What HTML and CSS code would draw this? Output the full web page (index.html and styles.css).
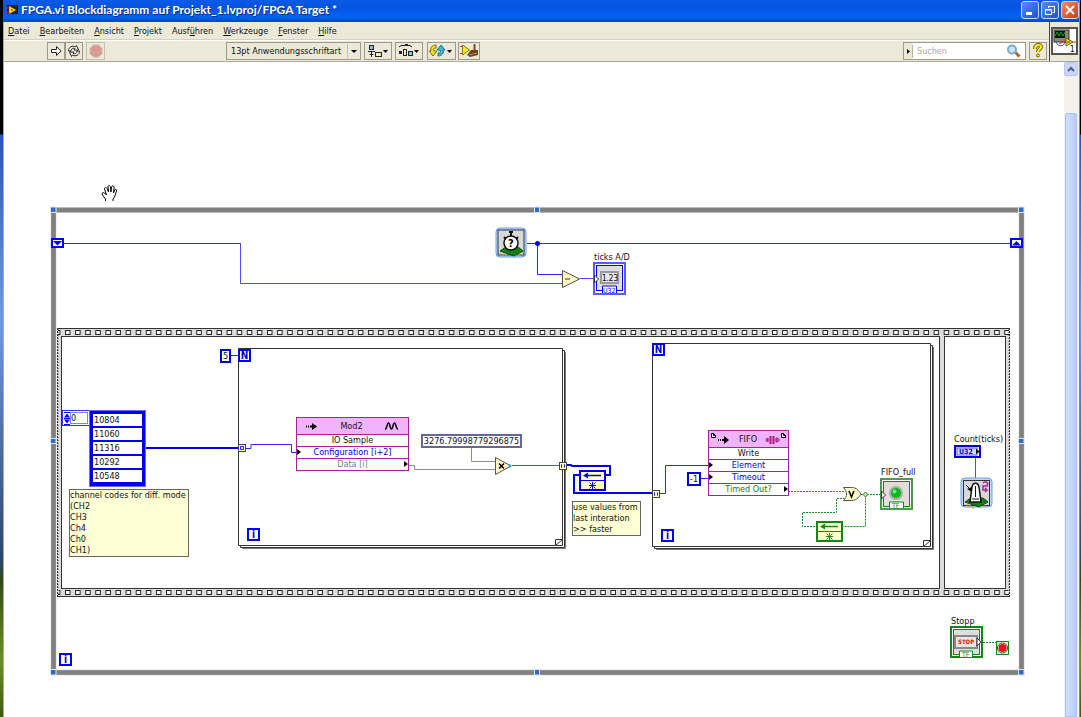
FILE: index.html
```html
<!DOCTYPE html>
<html lang="de">
<head>
    <meta charset="UTF-8">
    <title>FPGA.vi Blockdiagramm</title>
    <link rel="stylesheet" href="styles.css">
</head>
<body>
    <div class="window">
        <header class="titlebar">
            <svg class="title-icon" width="12" height="12" viewBox="0 0 12 12">
                <rect x="1" y="1" width="11" height="9" fill="#222"/>
                <path d="M3 2l7 4-7 4z" fill="#ffe600"/>
                <path d="M0 4h4M0 8h4" stroke="#e33"/>
                <path d="M5 6h2" stroke="#222"/>
            </svg>
            <h1>FPGA.vi Blockdiagramm auf Projekt_1.lvproj/FPGA Target *</h1>
            <div class="window-buttons">
                <button type="button" class="win-btn" aria-label="Minimieren"><svg width="16" height="16"><path d="M4 11.500h6" stroke="#fff" stroke-width="3"/></svg></button>
                <button type="button" class="win-btn" aria-label="Wiederherstellen"><svg width="16" height="16" fill="none" stroke="#fff"><path d="M6.500 6V4.500H12.500V10.500H10.500M6 4.500h7"/><path d="M3.500 7.500h6v5h-6zM3 8h7"/></svg></button>
                <button type="button" class="win-btn close" aria-label="Schließen"><svg width="16" height="16"><path d="M4 4l8 8M12 4l-8 8" stroke="#fff" stroke-width="2"/></svg></button>
            </div>
        </header>

        <div class="head">
            <div class="bars">
                <nav class="menu">
                    <a href="#"><u>D</u>atei</a>
                    <a href="#"><u>B</u>earbeiten</a>
                    <a href="#"><u>A</u>nsicht</a>
                    <a href="#"><u>P</u>rojekt</a>
                    <a href="#">Ausf<u>ü</u>hren</a>
                    <a href="#"><u>W</u>erkzeuge</a>
                    <a href="#"><u>F</u>enster</a>
                    <a href="#"><u>H</u>ilfe</a>
                </nav>
                <div class="toolbar">
                    <div class="group">
                        <button type="button" class="tool" aria-label="Ausführen"><svg width="16" height="14"><path d="M3.500 5.500h5v-3l4.500 4.500-4.500 4.500v-3h-5z" fill="#fff" stroke="#222"/></svg></button>
                        <button type="button" class="tool" aria-label="Wiederholt ausführen"><svg width="16" height="14" fill="#fff" stroke="#222"><path d="M2.500 7c0-4 4-6 7-4l1-1.500 2 4.500h-4.500l1-1.500c-2-1-4 0-4 2.500z"/><path d="M13.500 7c0 4-4 6-7 4l-1 1.500-2-4.500h4.500l-1 1.500c2 1 4 0 4-2.500z"/></svg></button>
                    </div>
                    <button type="button" class="tool abort" aria-label="Abbrechen" disabled><svg width="16" height="14"><path d="M5.500 1h5l3.500 3.500v5l-3.500 3.500h-5L2 9.500v-5z" fill="#d99a94" stroke="#c9b4ae"/></svg></button>
                    <div class="font-box">
                        <select aria-label="Schriftart"><option>13pt Anwendungsschriftart</option></select>
                        <svg class="arrow" width="14" height="16"><path d="M1.500 1v14" stroke="#c5c2b2"/><path d="M5 7h6l-3 3z"/></svg>
                    </div>
                    <button type="button" class="tool drop" aria-label="Objekte ausrichten"><svg width="26" height="16"><rect x="4.500" y="2.500" width="4" height="4" fill="#6ccbe8" stroke="#222"/><path d="M3 8.500h7M6.500 9v5M4.500 11.500h4" stroke="#222"/><rect x="10.500" y="9.500" width="6" height="4" fill="#f5ef9b" stroke="#222"/><path d="M18 7h5l-2.500 3z"/></svg></button>
                    <button type="button" class="tool drop" aria-label="Objekte einteilen"><svg width="26" height="16"><path d="M3 4l2-1.500h9l2 1.500M9 1.500h3" stroke="#222" fill="none"/><path d="M3 9.500h3" stroke="#222" stroke-width="3"/><rect x="7.500" y="6.500" width="3" height="6" fill="#f5ef9b" stroke="#222"/><rect x="12.500" y="8.500" width="4" height="4" fill="#6ccbe8" stroke="#222"/><path d="M18 7h5l-2.500 3z"/></svg></button>
                    <button type="button" class="tool drop order" aria-label="Neu ordnen"><svg width="27" height="16"><path d="M8 2C4 2 2 5 3 8H1l4 5 4-5H6c-1-2 0-3 2-3z" fill="#f2e11c" stroke="#777014"/><path d="M10 13c4 0 6-3 5-6h2l-4-5-4 5h3c1 2 0 3-2 3z" fill="#41b8cf" stroke="#1f7387"/><path d="M19 7h5l-2.500 3z"/></svg></button>
                    <button type="button" class="tool clean" aria-label="Diagramm aufräumen"><svg width="20" height="16"><path d="M1 3.500h3M1 10.500h3" stroke="#e22"/><path d="M3.500 2l7 5-7 5z" fill="#ffe52b" stroke="#8a7a10"/><path d="M15.500 1v7" stroke="#7a4b1c" stroke-width="2"/><path d="M12 7h7v5l-8 2-3-2z" fill="#6b431c"/><path d="M10 12l8-2" stroke="#c89040"/></svg></button>
                    <div class="search">
                        <svg width="10" height="15"><path d="M3 5l3 2.500L3 10z"/><path d="M8.500 1v13" stroke="#b5b2a2"/></svg>
                        <input type="search" aria-label="Suchen" placeholder="Suchen">
                        <svg width="16" height="15"><path d="M9.500 8.500l4 4" stroke="#b3622d" stroke-width="3"/><circle cx="6" cy="5.500" r="4" fill="#c5e7fb" stroke="#7fa8cf" stroke-width="2"/></svg>
                    </div>
                    <button type="button" class="tool help" aria-label="Kontexthilfe"><svg width="16" height="16"><path d="M5 6c0-5 6-5 6-2 0 2-3 2-3 5" fill="none" stroke="#766b00" stroke-width="4"/><path d="M5 6c0-5 6-5 6-2 0 2-3 2-3 5" fill="none" stroke="#ffe81a" stroke-width="2"/><circle cx="8" cy="12.500" r="1.500" fill="#ffe81a" stroke="#766b00"/></svg></button>
                </div>
            </div>
            <div class="vi-panel">
                <svg class="vi-icon" width="27" height="28" viewBox="0 0 27 28">
                    <rect x="1" y="1" width="25" height="26" fill="#fff" stroke="#555" stroke-width="2"/>
                    <rect x="3" y="3" width="15" height="12" fill="#8c8a6a" stroke="#333"/>
                    <rect x="4" y="4" width="10" height="7" fill="#001800"/>
                    <path d="M4 9l2-4 2 4 2-4 2 4 2-4" fill="none" stroke="#18a030"/>
                    <path d="M5 15c2 5 8 5 9 0" fill="none" stroke="#33c"/>
                    <path d="M8 17l8-4M22 15h4" stroke="#e22"/>
                    <path d="M15 11l7 4-7 4z" fill="#ffe52b" stroke="#665a00"/>
                    <path d="M16 15h3" stroke="#222"/>
                    <text x="19" y="25" class="t8">1</text>
                </svg>
            </div>
        </div>

        <div class="work">
            <main class="canvas">
                <svg class="wires" width="1060" height="655" viewBox="4 62 1060 655">
                    <defs>
                        <pattern id="film" x="65" y="328" width="10.100" height="9" patternUnits="userSpaceOnUse">
                            <rect width="11" height="9" fill="#dcdcdc"/>
                            <rect x=".5" y="2.500" width="4.500" height="4" fill="#fff" stroke="#222"/>
                        </pattern>
                        <pattern id="film2" x="65" y="588" width="10.100" height="9" patternUnits="userSpaceOnUse">
                            <rect width="11" height="9" fill="#dcdcdc"/>
                            <rect x=".5" y="2.500" width="4.500" height="4" fill="#fff" stroke="#222"/>
                        </pattern>
                    </defs>

                    <!-- while loop -->
                    <rect x="53.500" y="210" width="968" height="462.500" fill="none" stroke="#bbb" stroke-width="5.500"/>
                    <rect x="53.500" y="210" width="968" height="462.500" fill="none" stroke="#808080" stroke-width="4.500"/>
                    <g fill="#316ac5" stroke="#dce8f8">
                        <rect x="50.500" y="207" width="5.500" height="5.500"/><rect x="534.500" y="207" width="5" height="5.500"/><rect x="1018.500" y="207" width="5.500" height="5.500"/>
                        <rect x="50.500" y="438.500" width="5.500" height="5"/><rect x="1018.500" y="438.500" width="5.500" height="5"/>
                        <rect x="50.500" y="669.500" width="5.500" height="5.500"/><rect x="534.500" y="669.500" width="5" height="5.500"/><rect x="1018.500" y="669.500" width="5.500" height="5.500"/>
                    </g>

                    <!-- flat sequence -->
                    <rect x="57" y="328" width="953" height="269" fill="#dcdcdc"/>
                    <rect x="58" y="328" width="951" height="9" fill="url(#film)"/>
                    <rect x="58" y="588" width="951" height="9" fill="url(#film2)"/>
                    <path d="M57 328.500h953M57 596.500h953" stroke="#333"/>
                    <path d="M57.500 328v269M1009.500 328v269" stroke="#333" stroke-dasharray="2 1"/>
                    <path d="M58.500 329v267M1008.500 329v267" stroke="#999" stroke-dasharray="1 2"/>
                    <rect x="61.500" y="336.500" width="878" height="252" fill="#fff" stroke="#333"/>
                    <rect x="944.500" y="336.500" width="61" height="252" fill="#fff" stroke="#333"/>

                    <!-- for loops -->
                    <g fill="#fff" stroke="#333">
                        <path d="M242.500 352.500h323v196h-323z" stroke="#777"/>
                        <path d="M240.500 350.500h324v197h-324z"/>
                        <path d="M238.500 348.500h324v197h-324z"/>
                        <path d="M555.500 545.500v-6h7z"/>
                        <path d="M656.500 347.500h277v202h-277z" stroke="#777"/>
                        <path d="M654.500 345.500h278v203h-278z"/>
                        <path d="M652.500 343.500h278v203h-278z"/>
                        <path d="M923.500 546.500v-6h7z"/>
                    </g>

                    <!-- integer wires -->
                    <g fill="none" stroke="#2828ff">
                        <path d="M64 243.500H241M527 243.500h483M537.500 243.500v31h25M231 355.500h7M701 478.500h7"/>
                        <path d="M240.500 243v40.500H562M580 278.500h14M512 465.500h47M975.500 458v20" stroke="#4a4aff"/>
                        <path d="M245 448.500h6v-4h40.500v8h5M660 493.500h5.500v-28h43"/>
                    </g>
                    <circle cx="537.500" cy="243.500" r="2.500" fill="#0000ff"/>
                    <g fill="none" stroke="#0000f0" stroke-width="2">
                        <path d="M146 448h92"/>
                        <path d="M566 465h5l1 1h38v9h-4M579 475h-5v18h79"/>
                    </g>

                    <!-- fixed-point wires -->
                    <path d="M409 465.500h5.500v4h81M471.500 448v13.500h24" fill="none" stroke="#8888aa"/>

                    <!-- boolean wires -->
                    <path d="M788 491.500h56M861 494.500h20M865.500 494.500v32h-23M815 526.500h-12.500v-14h34v-14h8M983 642.500h13" fill="none" stroke="#1a8a1a" stroke-dasharray="2 1"/>
                    <path d="M865.500 492l2.500 2.500-2.500 2.500-2.500-2.500z" fill="#bfe5bf" stroke="#1a8a1a"/>

                    <!-- tunnels -->
                    <g fill="#ffffcc" stroke="#444">
                        <rect x="238.500" y="444.500" width="7" height="7"/><rect x="559.500" y="462.500" width="7" height="7"/><rect x="652.500" y="490.500" width="7" height="7"/>
                    </g>
                    <g fill="none" stroke="#2020f0">
                        <path d="M240.500 446.500h3v3h-3zM562 464.500h-.5v3h.5M564 464.500h.5v3h-.5M655 492.500h-.5v3h.5M657 492.500h.5v3h-.5"/>
                    </g>

                    <!-- shift registers -->
                    <g fill="#fff" stroke="#0000ff" stroke-width="2"><rect x="52" y="239" width="11" height="8"/><rect x="1011" y="239" width="11" height="8"/></g>
                    <path d="M53 241h9l-4.500 4.500zM1012 245.500h9l-4.500-4.500z" fill="#0000e0"/>

                    <!-- arithmetic and logic -->
                    <g fill="#fdf8c8" stroke="#555">
                        <path d="M562.500 270.500v17l17-8.500z"/>
                        <path d="M495.500 457.500v17l15.500-8.500z"/>
                        <path d="M843.500 487.500h8c5 0 7 3 9.500 6.500-2.500 4-5 6.500-9.500 6.500h-8c4-4 4-9 0-13z"/>
                    </g>
                    <path d="M565 279h5" stroke="#333"/>
                    <path d="M499 463.500l5 5M504 463.500l-5 5M849 491l2.500 6 2.500-6" stroke="#000" fill="none" stroke-width="1.500"/>
                    <path d="M509 464l3 2-3 2z" fill="#2090ff"/>

                    <!-- hand cursor -->
                    <path d="M105.500 201v-2l-3-4c-1-2 0-3 2-2l2 2-2-6c0-2 2-2 3 0l1 3-.5-5c0-2 2-2 2.500 0l.5 5 .5-5c1-2 3-1 2.500 1l-.5 5 1-3c1-1 2.500-1 2 1l-2 6-1.500 2v2" fill="#fff" stroke="#000"/>
                </svg>

                <div class="terminal n-first">N</div>
                <div class="terminal i-first">i</div>
                <div class="terminal n-second">N</div>
                <div class="terminal i-second">i</div>
                <div class="terminal i-while">i</div>

                <input class="const count" aria-label="Anzahl" value="5">
                <input class="const timeout" aria-label="Timeout" value="-1">
                <input class="const factor" aria-label="Faktor" value="3276.79998779296875">

                <div class="index">
                    <svg width="6" height="13"><path d="M0 5.500l3-4 3 4zM0 7.500l3 4 3-4z" fill="#0000ff"/><path d="M0 6.500h6M0 .5h6M0 12.500h6" stroke="#0000ff"/></svg>
                    <input aria-label="Index" value="0">
                </div>
                <div class="array">
                    <input aria-label="Kanal 0" value="10804">
                    <input aria-label="Kanal 1" value="11060">
                    <input aria-label="Kanal 2" value="11316">
                    <input aria-label="Kanal 3" value="10292">
                    <input aria-label="Kanal 4" value="10548">
                </div>

                <p class="comment channels">channel codes for diff. mode<br>(CH2<br>CH3<br>Ch4<br>Ch0<br>CH1)</p>
                <p class="comment faster">use values from<br>last interation<br>&gt;&gt; faster</p>

                <div class="io-node mod">
                    <div class="io-head">
                        <svg width="14" height="10"><path d="M1 5.500h1M3 5.500h1M5 5.500h6" stroke="#000" stroke-width="2"/><path d="M7 2v7l5-3.500z"/></svg>
                        <span>Mod2</span>
                        <svg width="15" height="10"><path d="M1 8c2 0 2-6 3.500-6S6 8 7.500 8 9 2 10.500 2 12 8 14 8" fill="none" stroke="#000" stroke-width="1.500"/></svg>
                    </div>
                    <div class="io-row">IO Sample</div>
                    <div class="io-row int in">Configuration [i+2]</div>
                    <div class="io-row fxp out">Data [i]</div>
                </div>

                <div class="io-node fifo">
                    <div class="io-head">
                        <svg width="21" height="14"><path d="M1.500 1.500h2l2 2v2h-4zM3.500 1.500v2h2" fill="#fff" stroke="#000"/><path d="M8 8h1M10 8h1M12 8h4" stroke="#000" stroke-width="2"/><path d="M14 4v8l5-4z"/></svg>
                        <span>FIFO</span>
                        <svg width="22" height="14"><path d="M2.500 6v4M5.500 4v8M8.500 4v8M11.500 6v4" stroke="#b01878" stroke-width="2"/><path d="M0 8h13" stroke="#c040a0"/><path d="M12 5.500l2.500 2.500-2.500 2.500" fill="none" stroke="#402060"/><path d="M16.500 1.500h2l2 2v2h-4zM18.500 1.500v2h2" fill="#fff" stroke="#000"/></svg>
                    </div>
                    <div class="io-row">Write</div>
                    <div class="io-row int in">Element</div>
                    <div class="io-row int in">Timeout</div>
                    <div class="io-row bool out">Timed Out?</div>
                </div>

                <svg class="node feedback" width="27" height="21" viewBox="0 0 27 21" color="#0000e0"><use href="#fb"/></svg>
                <svg class="node feedback-bool" width="27" height="21" viewBox="0 0 27 21" color="#118811">
                    <g id="fb">
                        <rect x="1" y="1" width="25" height="19" fill="#ffffcc" stroke="currentColor" stroke-width="2"/>
                        <path d="M1 10.500h25" stroke="currentColor"/>
                        <path d="M4 5.500l5-3v6z" fill="currentColor"/><path d="M8 5.500h14" stroke="currentColor" stroke-width="1.500"/>
                        <path d="M10.500 12.500l2 2M16.500 12.500l-2 2M10.500 18.500l2-2M16.500 18.500l-2-2M13.500 12v7M10 15.500h7" fill="none" stroke="currentColor"/>
                    </g>
                </svg>

                <svg class="node tick" width="32" height="32" viewBox="0 0 32 32">
                    <rect x="1" y="1" width="30" height="29" rx="4" fill="#b8d8ff" stroke="#6aa0f0"/>
                    <rect x="3" y="3" width="26" height="25" fill="#d8d8d8" stroke="#333"/>
                    <path d="M5 24l6-4h12l5 4-9 5z" fill="#128012" stroke="#0a4a0a"/>
                    <path d="M5 25v3M8 26v3M11 27v3M21 28v2M24 27v2M27 25v3" stroke="#c8b030"/>
                    <path d="M14 5h4M16 5v4M9 10l2 2M23 10l-2 2" stroke="#111" stroke-width="2"/>
                    <circle cx="16" cy="16" r="7" fill="#fff" stroke="#111" stroke-width="1.500"/>
                    <text x="13" y="20" class="tb">?</text>
                </svg>

                <svg class="node wait" width="33" height="33" viewBox="0 0 33 33">
                    <rect x="1" y="1" width="31" height="29" rx="4" fill="#b8d8ff" stroke="#6aa0f0"/>
                    <rect x="3.500" y="3.500" width="26" height="25" fill="#d8d8d8" stroke="#333"/>
                    <path d="M5 25l6-4h12l5 4-9 5z" fill="#128012" stroke="#0a4a0a"/>
                    <path d="M7 27v3M10 28v3M13 29v3M21 29v2M24 28v2" stroke="#c8b030"/>
                    <path d="M10 25l2-15c1-5 6-5 7 0l2 15z" fill="#fff" stroke="#111" stroke-width="1.500"/>
                    <path d="M15.500 9v11M12 22h7M6 8l6 6" stroke="#111"/><path d="M7 12l5-2v5z"/>
                    <path d="M23 6c3-3 6 0 4 3h-4v4h4l-2-2M27 13l-2 2" fill="none" stroke="#b020a0" stroke-width="1.500"/>
                </svg>

                <svg class="node ticks-out" width="33" height="33" viewBox="0 0 33 33">
                    <rect x="1" y="1" width="31" height="31" fill="#fff" stroke="#5a5aff" stroke-width="2"/>
                    <rect x="3.500" y="3.500" width="26" height="25" fill="#dedede" stroke="#0000e0"/>
                    <path d="M1.500 13l4 4-4 4z" fill="#fff" stroke="#333"/>
                    <rect x="8" y="10" width="17" height="11" fill="#e6e6e6" stroke="#999" stroke-width="2"/>
                    <text x="9" y="19" class="t8">1.23</text>
                    <path d="M9.500 31v-7h14v7" fill="#fff" stroke="#0000e0"/>
                    <text x="10" y="31" class="t7 blue">U32</text>
                </svg>

                <svg class="node led" width="33" height="33" viewBox="0 0 33 33">
                    <rect x="1" y="1" width="31" height="30" fill="#fff" stroke="#4a9a4a" stroke-width="2"/>
                    <rect x="3.500" y="3.500" width="26" height="25" fill="#dedede" stroke="#118811"/>
                    <path d="M1.500 13l4 4-4 4z" fill="#fff" stroke="#333"/>
                    <circle cx="16" cy="15" r="7" fill="#aaa"/><circle cx="16" cy="15" r="5" fill="#11b522"/><circle cx="14.500" cy="13.500" r="2" fill="#6cf07a"/>
                    <path d="M9.500 30v-6h14v6" fill="#fff" stroke="#118811"/>
                    <text x="12" y="30" class="t7 green">TF</text>
                </svg>

                <svg class="node u32" width="28" height="14" viewBox="0 0 28 14">
                    <rect x="1" y="1" width="25" height="11" fill="#fff" stroke="#0000e0" stroke-width="2"/>
                    <rect x="3" y="3" width="20" height="7" fill="#d8d8ff" stroke="#5a5aff"/>
                    <text x="5" y="9" class="tb7 blue">U32</text>
                    <path d="M22 4l4 2.500-4 2.500z"/>
                </svg>

                <button type="button" class="node stop" aria-label="Stopp">
                    <svg width="33" height="32" viewBox="0 0 33 32">
                        <rect x="1" y="1" width="31" height="30" fill="#fff" stroke="#118811" stroke-width="2"/>
                        <rect x="3.500" y="3.500" width="26" height="25" fill="#dedede" stroke="#118811"/>
                        <rect x="5" y="10" width="22" height="12" fill="#e6e6e6" stroke="#888" stroke-width="2"/>
                        <text x="8" y="18" class="tb6 red">STOP</text>
                        <path d="M27 12l4 4-4 4z" fill="#fff" stroke="#333"/>
                        <path d="M9.500 31v-6h13v6" fill="#fff" stroke="#118811"/>
                        <text x="12" y="31" class="t7 green">TF</text>
                    </svg>
                </button>
                <svg class="node stop-cond" width="14" height="14" viewBox="0 0 14 14">
                    <rect x=".5" y=".5" width="12" height="13" fill="#e8f8c8" stroke="#118811"/>
                    <circle cx="6.500" cy="7" r="5" fill="#fff" stroke="#444"/>
                    <circle cx="6.500" cy="7" r="4" fill="#ff1010"/>
                </svg>

                <span class="label l-ticks">ticks A/D</span>
                <span class="label l-full">FIFO_full</span>
                <span class="label l-count">Count(ticks)</span>
                <span class="label l-stop">Stopp</span>
            </main>
            <div class="scrollbar">
                <button type="button" class="scroll-up" aria-label="Nach oben"><svg width="12" height="12"><path d="M3 8l3-3 3 3" fill="none" stroke="#4d6185" stroke-width="2"/></svg></button>
                <div class="thumb"></div>
            </div>
        </div>
    </div>
</body>
</html>
```

FILE: styles.css
```css
* {
    box-sizing: border-box;
}
body {
    margin: 0;
    padding: 0 1px 0 3px;
    height: 100vh;
    overflow: hidden;
    background: linear-gradient(#000 134px, #2a55b8 135px, #6f9be0 320px, #2d4470 560px, #2f4a18 580px, #6f9020 660px, #3c5a12);
    font-family: "DejaVu Sans Condensed", "DejaVu Sans", sans-serif;
    font-size: 9px;
    color: #111;
}
button, input, select {
    font: inherit;
    color: inherit;
    margin: 0;
    padding: 0;
}
svg {
    display: block;
}
.window {
    display: flex;
    flex-direction: column;
    height: 100vh;
    background: #ece9d8;
    border-right: 1px solid #8a8a80;
}

/* title */
.titlebar {
    display: flex;
    align-items: center;
    height: 22px;
    padding: 0 0 2px 3px;
    background: linear-gradient(#0a5be8, #0454e0 30%, #0560f6 75%, #0048c8);
}
.titlebar h1 {
    flex: 1;
    margin: 0 0 0 3px;
    font-family: Lato, "Open Sans", sans-serif;
    font-size: 12px;
    line-height: 16px;
    color: #fff;
    text-shadow: 1px 1px 0 #0a2a80;
    white-space: nowrap;
}
.window-buttons {
    display: flex;
    gap: 2px;
}
.win-btn {
    width: 18px;
    height: 18px;
    border: 1px solid #c8d8fa;
    border-radius: 3px;
    background: linear-gradient(135deg, #5a8af5, #1f4fd8);
}
.win-btn.close {
    background: linear-gradient(135deg, #f0896a, #d03c10);
}

/* menu and toolbar */
.head {
    display: flex;
    height: 40px;
    border-left: 1px solid #aca899;
    border-bottom: 1px solid #aca899;
}
.bars {
    flex: 1;
}
.menu {
    display: flex;
    align-items: center;
    gap: 10px;
    height: 18px;
    padding-left: 4px;
    border-bottom: 1px solid #d5d1bd;
}
.menu a {
    color: #111;
    text-decoration: none;
}
.toolbar {
    display: flex;
    align-items: center;
    height: 21px;
    padding: 0 2px 0 43px;
    border-top: 1px solid #fff;
}
.group {
    display: flex;
}
.tool {
    display: flex;
    align-items: center;
    justify-content: center;
    width: 18px;
    height: 18px;
    border: 1px solid #9d9a8a;
    background: #ece9d8;
}
.tool.abort {
    width: 19px;
    margin: 0 121px 0 3px;
    border-color: #c5c2b2;
}
.tool.drop {
    width: 28px;
    margin-left: 3px;
}
.tool.order {
    width: 29px;
    margin: 0 2px 0 4px;
}
.tool.clean {
    width: 22px;
}
.font-box {
    position: relative;
    width: 135px;
    height: 18px;
    border: 1px solid #9d9a8a;
}
.font-box select {
    width: 100%;
    height: 16px;
    padding-left: 4px;
    border: 0;
    background: none;
    appearance: none;
}
.font-box .arrow {
    position: absolute;
    right: 0;
    top: 0;
    pointer-events: none;
}
.search {
    display: flex;
    align-items: center;
    width: 123px;
    height: 18px;
    margin-left: auto;
    padding-right: 3px;
    border: 1px solid #9d9a8a;
    background: linear-gradient(90deg, #ece9d8 8px, #fff 8px);
}
.search input {
    flex: 1;
    min-width: 0;
    padding-left: 3px;
    border: 0;
    background: none;
}
.search input::placeholder {
    color: #aca899;
}
.tool.help {
    margin-left: 3px;
}
.vi-panel {
    width: 30px;
    border-left: 1px solid #444;
    padding: 5px 0 0 1px;
}

/* diagram */
.work {
    display: flex;
    flex: 1;
    min-height: 0;
}
.canvas {
    position: relative;
    flex: 1;
    overflow: hidden;
    background: #fff;
    border-left: 1px solid #aca899;
}
.wires {
    position: absolute;
    left: 0;
    top: 0;
}
.node, .terminal, .const, .index, .array, .comment, .io-node, .label {
    position: absolute;
}
.label {
    line-height: 12px;
    white-space: nowrap;
}
.l-ticks { left: 590px; top: 189px; }
.l-full { left: 877px; top: 404px; }
.l-count { left: 950px; top: 371px; }
.l-stop { left: 947px; top: 553px; }

.terminal {
    width: 13px;
    height: 13px;
    border: 2px solid #0000ff;
    background: #ffffe0;
    color: #0000d0;
    font-size: 10px;
    font-weight: bold;
    line-height: 9px;
    text-align: center;
}
.n-first { left: 234px; top: 287px; }
.i-first { left: 243px; top: 466px; }
.n-second { left: 648px; top: 281px; }
.i-second { left: 657px; top: 467px; }
.i-while { left: 55px; top: 591px; }

.const {
    height: 14px;
    border: 2px solid #0000e0;
    background: #fff;
    text-align: center;
}
.count { left: 216px; top: 287px; width: 11px; }
.timeout { left: 683px; top: 410px; width: 14px; }
.factor {
    left: 417px;
    top: 372px;
    width: 101px;
    border-color: #66669a;
}
.index {
    display: flex;
    left: 58px;
    top: 348px;
    width: 28px;
    height: 16px;
    padding: 1px;
    border: 1px solid #3030ff;
    background: #fff;
}
.index input {
    flex: 1;
    min-width: 0;
    border: 1px solid #8080ff;
    background: #fff;
}
.array {
    display: flex;
    flex-direction: column;
    gap: 2px;
    left: 85px;
    top: 348px;
    width: 57px;
    padding: 3px 3px 4px;
    border: 1px solid #6a6aff;
    background: #0000f0;
}
.array input {
    width: 100%;
    height: 12px;
    padding-left: 1px;
    border: 0;
    background: #fff;
}
.comment {
    margin: 0;
    border: 1px solid #666;
    background: #ffffd5;
    line-height: 11px;
    white-space: nowrap;
}
.channels { left: 65px; top: 427px; width: 120px; }
.faster { left: 568px; top: 439px; width: 69px; }

.io-node {
    border: 1px solid #a8209a;
    background: #fff;
    text-align: center;
}
.mod { left: 292px; top: 355px; width: 113px; }
.fifo { left: 704px; top: 368px; width: 81px; }
.io-head {
    display: flex;
    align-items: center;
    justify-content: space-between;
    height: 16px;
    background: #f0b4ff;
}
.mod .io-head {
    padding: 0 9px 0 8px;
}
.fifo .io-head {
    padding: 0 1px;
}
.io-row {
    position: relative;
    height: 12px;
    border-top: 1px solid #a8209a;
    line-height: 11px;
}
.int { color: #0000e0; }
.fxp { color: #77779a; }
.bool { color: #118011; }
.in::before, .out::after {
    content: "";
    position: absolute;
    top: 2px;
    border: solid transparent;
    border-width: 3px 0 3px 4px;
    border-left-color: #000;
}
.in::before { left: 0; }
.out::after { right: 0; }

.feedback { left: 575px; top: 408px; }
.feedback-bool { left: 812px; top: 459px; }
.tick { left: 491px; top: 165px; }
.wait { left: 956px; top: 415px; }
.ticks-out { left: 589px; top: 200px; }
.led { left: 876px; top: 416px; }
.u32 { left: 950px; top: 383px; }
.stop {
    left: 946px;
    top: 564px;
    border: 0;
    background: none;
}
.stop-cond { left: 992px; top: 579px; }

.t7 { font-size: 7px; }
.t8 { font-size: 8px; }
.tb { font-size: 11px; font-weight: bold; }
.tb6 { font-size: 6px; font-weight: bold; }
.tb7 { font-size: 7px; font-weight: bold; }
.blue { fill: #0000e0; }
.green { fill: #118811; }
.red { fill: #d01020; }

/* scrollbar */
.scrollbar {
    width: 15px;
    background: #f3f2ec;
}
.scroll-up {
    display: block;
    width: 14px;
    height: 14px;
    border: 1px solid #b8c8f4;
    border-radius: 2px;
    background: #c8d6fb;
}
.thumb {
    height: calc(100% - 51px);
    margin: 37px 2px 0 1px;
    border: 1px solid #a9bff2;
    border-radius: 2px 2px 0 0;
    background: linear-gradient(90deg, #d0defd, #b9cdfa);
}
```
